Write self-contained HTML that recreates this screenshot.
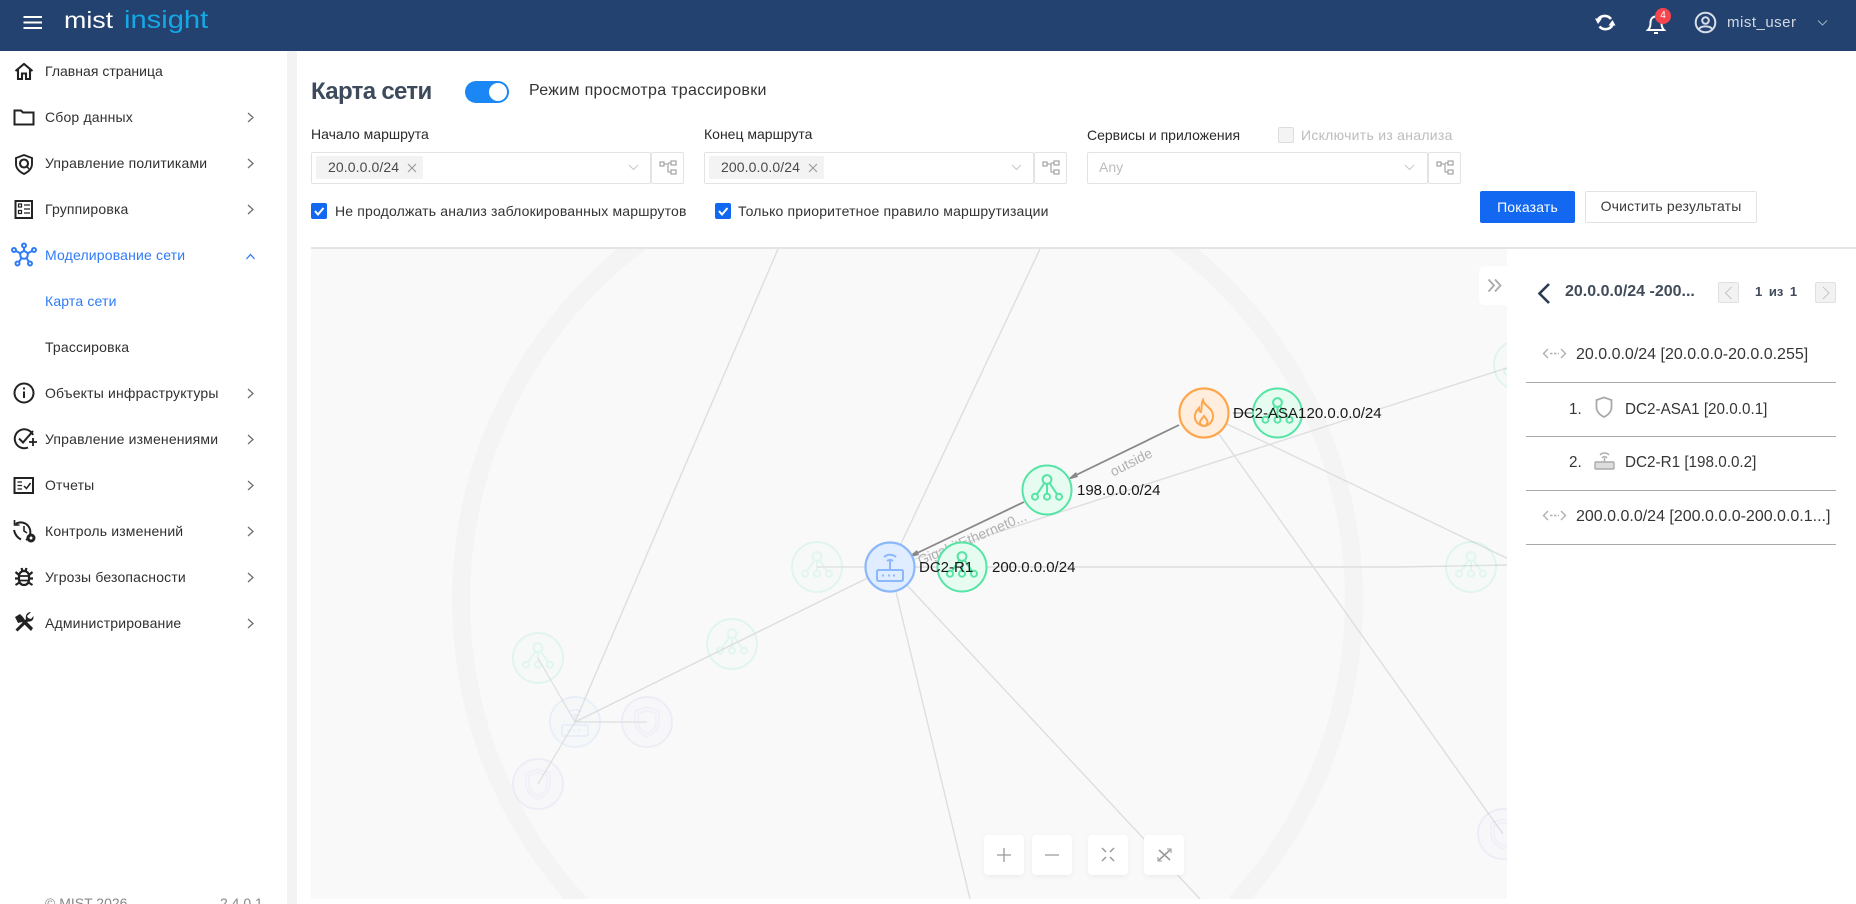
<!DOCTYPE html>
<html lang="ru"><head><meta charset="utf-8"><title>Карта сети</title>
<style>
html,body{margin:0;padding:0;width:1856px;height:904px;overflow:hidden;background:#fff;font-family:"Liberation Sans",Arial,sans-serif;color:#333}
#p{position:absolute;left:0;top:0;width:1856px;height:904px;overflow:hidden;filter:blur(.35px)}
.a{position:absolute}
.t{position:absolute;white-space:nowrap;line-height:16px;height:16px;font-size:14px}
.s{letter-spacing:.17px}
svg{position:absolute;overflow:visible}
.n{color:#303030;letter-spacing:.17px}
.box{position:absolute;box-sizing:border-box;background:#fff;border:1.5px solid #e3e3e3;border-radius:2px}
.tag{position:absolute;background:#f3f3f3;border-radius:2px;height:23px}
.cb{position:absolute;width:16px;height:16px;background:#1268f0;border-radius:2px}
.r{color:#363636;font-size:16px}
.r2{color:#363636;font-size:15.250px}
</style></head><body>
<div class="a" style="left:0;top:0;width:1856px;height:51px;background:#24426f"></div>
<div id="p">
<svg width="0" height="0" style="position:absolute"><defs>
<g id="tree" fill="none" stroke="#55e4a4" stroke-width="2"><circle cx="0" cy="-10.5" r="4.4"/><circle cx="-12" cy="6.7" r="3"/><circle cx="0" cy="6.7" r="3"/><circle cx="12" cy="6.7" r="3"/><path d="M-2.5-7-10 4.2M0-6V3.700M2.5-7 10 4.2"/></g>
<g id="shield" fill="none" stroke="#c9b8f0" stroke-width="1.8"><path d="M0-15 12-11V0C12 8 6 12 0 15-6 12-12 8-12 0V-11Z"/><path d="M0-11.500 9-8.500V0C9 6 4.500 9.500 0 11.500-4.500 9.500-9 6-9 0V-8.500Z"/></g>
<g id="router" fill="none" stroke="#8ab8fb" stroke-width="2"><rect x="-13" y="3" width="26" height="11" rx="1.500"/><path d="M0 3V-7M-6-10A9 9 0 0 1 6-10M-3-6A4.500 4.500 0 0 1 3-6"/><path d="M-8 8.500H-6M-2 8.500H0M3 8.500H5" stroke-width="2"/></g>
</defs></svg>

<!-- header -->
<div class="a" style="left:0;top:0;width:1856px;height:51px;background:#24426f"></div>
<svg style="left:0;top:0" width="60" height="50"><path d="M23.500 17H42M23.500 22.500H42M23.500 28H42" stroke="#fff" stroke-width="2"/></svg>
<div class="t" style="left:64px;top:5px;height:30px;line-height:30px;font-size:23.500px;transform:scaleX(1.140);transform-origin:0 0;color:#fff">mist</div>
<div class="t" style="left:124px;top:5px;height:32px;line-height:30px;font-size:25px;transform:scaleX(1.165);transform-origin:0 0;color:#14a9e6">insight</div>
<svg style="left:1590px;top:10px" width="30" height="26" fill="none" stroke="#fff" stroke-width="2.600"><path d="M8 9.500A8 8 0 0 1 21 9"/><path d="M22.500 15A8 8 0 0 1 9.500 16.500"/><path d="M5 8.500H12L8 14ZM25.500 15.500H18.500L22.500 10Z" fill="#fff" stroke="none"/></svg>
<svg style="left:1645px;top:10px" width="22" height="26" fill="none" stroke="#fff" stroke-width="2"><path d="M3 20C5 18 5.500 16 5.500 13 5.500 9 7.500 6.500 11 6.500S16.500 9 16.500 13C16.500 16 17 18 19 20Z"/><path d="M9 23H13" stroke-width="2"/></svg>
<div class="a" style="left:1655px;top:8px;width:16px;height:16px;border-radius:50%;background:#f5454f;color:#fff;font-size:10px;line-height:16px;text-align:center">4</div>
<svg style="left:1694px;top:11px" width="24" height="24" fill="none" stroke="#d8dee8" stroke-width="2"><circle cx="11.500" cy="11.500" r="9.800"/><circle cx="11.500" cy="9.500" r="3.300"/><path d="M5 18C7 14.500 16 14.500 18 18"/></svg>
<div class="t" style="left:1727px;top:15px;color:#d2d9e3;font-size:15px;letter-spacing:.5px">mist_user</div>
<svg style="left:1816px;top:18px" width="12" height="10" fill="none" stroke="#9fb0c7" stroke-width="1"><path d="M2 2.500 6.500 7 11 2.500"/></svg>

<!-- sidebar -->
<div class="a" style="left:287px;top:51px;width:10px;height:853px;background:#f3f3f3"></div>
<div class="t n" style="left:45px;top:63px;letter-spacing:.02px">Главная страница</div>
<div class="t n" style="left:45px;top:109px">Сбор данных</div>
<div class="t n" style="left:45px;top:155px">Управление политиками</div>
<div class="t n" style="left:45px;top:201px">Группировка</div>
<div class="t s" style="left:45px;top:247px;color:#2f7bf6">Моделирование сети</div>
<div class="t s" style="left:45px;top:293px;color:#2f7bf6">Карта сети</div>
<div class="t n" style="left:45px;top:339px">Трассировка</div>
<div class="t n" style="left:45px;top:385px">Объекты инфраструктуры</div>
<div class="t n" style="left:45px;top:431px">Управление изменениями</div>
<div class="t n" style="left:45px;top:477px">Отчеты</div>
<div class="t n" style="left:45px;top:523px">Контроль изменений</div>
<div class="t n" style="left:45px;top:569px">Угрозы безопасности</div>
<div class="t n" style="left:45px;top:615px">Администрирование</div>
<div class="t" style="left:45px;top:895px;height:9px;overflow:hidden;font-size:14px;color:#888">© MIST 2026</div>
<div class="t" style="left:220px;top:895px;height:9px;overflow:hidden;font-size:14px;color:#888">2.4.0.1</div>

<svg style="left:0;top:0" width="287" height="660" fill="none" stroke="#6e6e6e" stroke-width="1.300">
<path d="M248 113 253 117.500 248 122M248 159 253 163.500 248 168M248 205 253 209.500 248 214M248 389 253 393.500 248 398M248 435 253 439.500 248 444M248 481 253 485.500 248 490M248 527 253 531.500 248 536M248 573 253 577.500 248 582M248 619 253 623.500 248 628"/>
<path d="M246.500 259 250.500 254.500 254.500 259" stroke="#2f7bf6"/>
</svg>
<!-- sidebar icons -->
<svg style="left:0;top:50px" width="45" height="600" fill="none" stroke="#222" stroke-width="2.100" stroke-linejoin="miter">
<path d="M15.500 21 24 14 32.500 21M18 19.500V29H22V23.500H26V29H30V19.500"/>
<path d="M14.500 60.500H21L23 62.500H33.500V74.500H14.500Z" stroke-width="2"/>
<path d="M24 105 32 108V114C32 119 28 122 24 124 20 122 16 119 16 114V108Z" stroke-width="1.900"/><circle cx="24" cy="113.500" r="4"/><path d="M27 116.500 29 119" stroke-width="1.600"/>
<rect x="15.500" y="151" width="16.500" height="17" stroke-width="2"/><path d="M24 155H30M24 159H30M24 163H30" stroke-width="1.200"/><rect x="18.500" y="154" width="3" height="3" stroke-width="1.200"/><rect x="18.500" y="160.500" width="3" height="3" stroke-width="1.200"/>
<g stroke="#2f7bf6" stroke-width="2"><circle cx="24" cy="205" r="3.800"/><circle cx="24" cy="195.500" r="2"/><circle cx="14" cy="200" r="2"/><circle cx="34" cy="200" r="2"/><circle cx="17.500" cy="213.500" r="2"/><circle cx="30" cy="213.500" r="2"/><path d="M24 197.500V201M16 201 20.500 203.500M32 201 27.500 203.500M19 212 21.500 208M29 212 26.500 208"/></g>
<circle cx="24" cy="343" r="9.500" stroke-width="2"/><path d="M24 341.500V348M24 337.500V339.500" stroke-width="2"/>
<path d="M33 385A9.500 9.500 0 1 0 28 397.500" stroke-width="2"/><path d="M19 388.500 23 392.500 33 381" stroke-width="2"/><path d="M33 388V396M29 392H37" stroke-width="1.800"/>
<rect x="14.500" y="428" width="18.500" height="15" stroke-width="2"/><path d="M17.500 432H22M17.500 435.500H22M17.500 439H22" stroke-width="1.300"/><path d="M24 436 26.500 438.500 30.500 433" stroke-width="1.500"/>
<path d="M15.500 474A9 9 0 1 1 26 490M14 480C15 485 18 488 21 489.500" stroke-width="2"/><path d="M14.500 470V475H19.500" stroke-width="1.600"/><path d="M24 476V481L27 483" stroke-width="1.600"/><circle cx="31" cy="488" r="3" stroke-width="3"/>
<g stroke-width="2.200"><rect x="19" y="521" width="10" height="14" rx="5"/><path d="M20 526H28M20 530.500H28"  stroke-width="1.800"/><path d="M15.500 522 19 525M32.500 522 29 525M15 528.500H19M33 528.500H29M15.500 535 19.500 532.500M32.500 535 28.500 532.500M21.500 518 22.500 521M26.500 518 25.500 521"/></g>
<path d="M15 567 20 564 23 567 25 570 33 578 31 581 22 572 18 573ZM31 562 27 566 28 568 31 569 33.500 566 33.500 567C33.500 571 30 572 28 571.500L17.500 581.500 15.500 579.500 26 569C25 566 27 562 31 562Z" fill="#222" stroke="none"/>
</svg>

<!-- top controls -->
<div class="t" style="left:311px;top:78px;height:28px;line-height:28px;font-size:24px;font-weight:bold;color:#3d4a5c;letter-spacing:-.67px">Карта сети</div>
<div class="a" style="left:465px;top:81px;width:44px;height:22px;border-radius:11px;background:#1a87f5"></div>
<div class="a" style="left:489px;top:83px;width:18px;height:18px;border-radius:50%;background:#fff"></div>
<div class="t" style="left:529px;top:83px;font-size:16px;letter-spacing:.3px;color:#333">Режим просмотра трассировки</div>

<div class="t" style="left:311px;top:126px;color:#2a2a2a">Начало маршрута</div>
<div class="t" style="left:704px;top:126px;color:#2a2a2a">Конец маршрута</div>
<div class="t" style="left:1087px;top:127px;color:#2a2a2a">Сервисы и приложения</div>
<div class="a" style="left:1278px;top:127px;width:16px;height:16px;box-sizing:border-box;border:1px solid #ddd;background:#f4f4f4;border-radius:2px"></div>
<div class="t" style="left:1301px;top:127px;color:#bdbdbd;letter-spacing:.28px">Исключить из анализа</div>

<div class="box" style="left:311px;top:152px;width:340px;height:32px"></div>
<div class="box" style="left:651px;top:152px;width:33px;height:32px"></div>
<div class="box" style="left:704px;top:152px;width:330px;height:32px"></div>
<div class="box" style="left:1034px;top:152px;width:33px;height:32px"></div>
<div class="box" style="left:1087px;top:152px;width:341px;height:32px"></div>
<div class="box" style="left:1428px;top:152px;width:33px;height:32px"></div>
<div class="tag" style="left:316px;top:156px;width:107px"></div>
<div class="tag" style="left:709px;top:156px;width:115px"></div>
<div class="t" style="left:328px;top:159px;color:#4a4a4a;letter-spacing:.1px">20.0.0.0/24</div>
<div class="t" style="left:721px;top:159px;color:#4a4a4a;letter-spacing:.1px">200.0.0.0/24</div>
<div class="t" style="left:1099px;top:159px;color:#bdbdbd">Any</div>
<svg style="left:0;top:0" width="1500" height="200" fill="none" stroke="#9a9a9a" stroke-width="1.100">
<path d="M408 164 416 172M416 164 408 172M809 164 817 172M817 164 809 172"/>
<g stroke="#c9c9c9"><path d="M629 165 633.500 169.500 638 165M1012 165 1016.500 169.500 1021 165M1405 165 1409.500 169.500 1414 165"/></g>
<g><rect x="660" y="162" width="4" height="4"/><rect x="671" y="161" width="5" height="4"/><rect x="671" y="170" width="5" height="4"/><path d="M664 164H668V172H671M668 163H671"/></g>
<g transform="translate(383,0)"><rect x="660" y="162" width="4" height="4"/><rect x="671" y="161" width="5" height="4"/><rect x="671" y="170" width="5" height="4"/><path d="M664 164H668V172H671M668 163H671"/></g>
<g transform="translate(777,0)"><rect x="660" y="162" width="4" height="4"/><rect x="671" y="161" width="5" height="4"/><rect x="671" y="170" width="5" height="4"/><path d="M664 164H668V172H671M668 163H671"/></g>
</svg>

<div class="cb" style="left:311px;top:203px"></div>
<div class="cb" style="left:715px;top:203px"></div>
<svg style="left:0;top:0" width="800" height="230" fill="none" stroke="#fff" stroke-width="2"><path d="M315 211 318 214.500 323.500 208M719 211 722 214.500 727.500 208"/></svg>
<div class="t s" style="left:335px;top:203px;color:#333">Не продолжать анализ заблокированных маршрутов</div>
<div class="t s" style="left:738px;top:203px;color:#333">Только приоритетное правило маршрутизации</div>

<div class="a s" style="left:1480px;top:191px;width:95px;height:32px;background:#1268f0;border-radius:2px;color:#fff;font-size:14px;line-height:32px;text-align:center">Показать</div>
<div class="box s" style="left:1585px;top:191px;width:172px;height:32px;border-color:#e3e3e3;font-size:14px;line-height:29px;text-align:center;color:#3a3a3a">Очистить результаты</div>

<!-- map -->
<div class="a" style="left:311px;top:247px;width:1545px;height:2px;background:#e4e4e4"></div>
<div class="a" style="left:311px;top:249px;width:1196px;height:650px;background:#f9f9f9"></div>
<svg style="left:311px;top:249px;overflow:hidden" width="1196" height="650" viewBox="311 249 1196 650">
<path d="M643.500 240A446.500 446.500 0 0 0 579.500 903M1171.500 240A446.500 446.500 0 0 1 1235.500 903" fill="none" stroke="#f4f4f4" stroke-width="18"/>
<g stroke="#dedede" stroke-width="1.400" fill="none">
<path d="M890 567 1040 249M890 567 1519 364M890 567H1400L1507 565M890 567 970 899M890 567 1200 899M890 567 575 722M1204 413 1519 564M1204 413 1503 834M575 722 778 249"/>
</g>
<g opacity=".14">
<circle cx="817" cy="567" r="25" fill="#e6fcf1" stroke="#4fe3a0" stroke-width="2"/><use href="#tree" x="817" y="567"/>
<circle cx="732" cy="644" r="25" fill="#e6fcf1" stroke="#4fe3a0" stroke-width="2"/><use href="#tree" x="732" y="644"/>
<circle cx="538" cy="658" r="25" fill="#e6fcf1" stroke="#4fe3a0" stroke-width="2"/><use href="#tree" x="538" y="658"/>
<circle cx="1471" cy="567" r="25" fill="#e6fcf1" stroke="#4fe3a0" stroke-width="2"/><use href="#tree" x="1471" y="567"/>
<circle cx="1519" cy="365" r="25" fill="#e6fcf1" stroke="#4fe3a0" stroke-width="2"/><use href="#tree" x="1519" y="365"/>
<circle cx="575" cy="722" r="25" fill="#e0ecff" stroke="#8ab8fb" stroke-width="2"/><use href="#router" x="575" y="722"/>
<circle cx="647" cy="722" r="25" fill="#ece6fb" stroke="#b8a0ef" stroke-width="2"/><use href="#shield" x="647" y="722"/>
<circle cx="538" cy="784" r="25" fill="#ece6fb" stroke="#b8a0ef" stroke-width="2"/><use href="#shield" x="538" y="784"/>
<circle cx="1503" cy="834" r="25" fill="#ece6fb" stroke="#b8a0ef" stroke-width="2"/><use href="#shield" x="1503" y="834"/>
</g>
<g stroke="#dedede" stroke-width="1.200" fill="none"><path d="M890 567 575 722M817 567H890M538 658 575 722 538 784M575 722H647"/></g>
<g stroke="#888" stroke-width="1.800" fill="none"><path d="M1179 425 1072 477M1024 502 913 555"/></g>
<path d="M1067 480 1076 472 1078 477ZM907 558 917 550 919 555Z" fill="#888"/>
<text x="1131" y="467" font-size="14" fill="#b0b0b0" text-anchor="middle" transform="rotate(-27 1131 462)" font-family="Liberation Sans,sans-serif">outside</text>
<text x="972" y="543" font-size="14" fill="#b0b0b0" text-anchor="middle" transform="rotate(-23 972 538)" font-family="Liberation Sans,sans-serif">GigabitEthernet0...</text>
<circle cx="1277.500" cy="413" r="24.500" fill="#e6fcf1" stroke="#55e4a4" stroke-width="2"/><use href="#tree" x="1277.500" y="413"/>
<circle cx="1204" cy="413" r="24.500" fill="#ffeede" stroke="#ffa64d" stroke-width="2.200"/>
<g transform="translate(1204 413)" fill="none" stroke="#ffa64d" stroke-width="2"><path d="M-1-13C0-8 4-7 7-3 11 2 9 12 0 13-8 12-11 5-8-1-7-3-6-4-5-5-5-2-4-1-3-1-2-5-3-9-1-13Z"/><path d="M0 3C2 6 4 7 3.500 9.500 3 12 1 13 0 13-1 13-4 12-4 9.500-4 7-2 6 0 3Z"/></g>
<circle cx="1047" cy="490" r="24.500" fill="#e6fcf1" stroke="#55e4a4" stroke-width="2"/><use href="#tree" x="1047" y="490"/>
<circle cx="962" cy="567" r="24.500" fill="#e6fcf1" stroke="#55e4a4" stroke-width="2"/><use href="#tree" x="962" y="567"/>
<circle cx="890" cy="567" r="24.500" fill="#e0ecff" stroke="#8ab8fb" stroke-width="2.200"/><use href="#router" x="890" y="567"/>
<path d="M1233 413H1252" stroke="#777" stroke-width="1"/>
<g font-family="Liberation Sans,sans-serif" font-size="15" fill="#181818">
<text x="1233" y="418">DC2-ASA1</text><text x="1306.500" y="418">20.0.0.0/24</text>
<text x="1077" y="495">198.0.0.0/24</text>
<text x="919" y="572">DC2-R1</text>
<text x="992" y="572">200.0.0.0/24</text>
</g>
</svg>

<!-- expand tab -->
<div class="a" style="left:1479px;top:266px;width:28px;height:39px;background:#fff;border-radius:6px 0 0 6px"></div>
<svg style="left:1485px;top:276px" width="22" height="20" fill="none" stroke="#aaa" stroke-width="1.800"><path d="M3.500 3.500 9 9.500 3.500 15.500M10 3.500 15.500 9.500 10 15.500"/></svg>

<!-- zoom controls -->
<div class="a" style="left:984px;top:835px;width:40px;height:40px;background:#fff;border-radius:4px;box-shadow:0 2px 6px rgba(0,0,0,.05)"></div>
<div class="a" style="left:1032px;top:835px;width:40px;height:40px;background:#fff;border-radius:4px;box-shadow:0 2px 6px rgba(0,0,0,.05)"></div>
<div class="a" style="left:1088px;top:835px;width:40px;height:40px;background:#fff;border-radius:4px;box-shadow:0 2px 6px rgba(0,0,0,.05)"></div>
<div class="a" style="left:1144px;top:835px;width:40px;height:40px;background:#fff;border-radius:4px;box-shadow:0 2px 6px rgba(0,0,0,.05)"></div>
<svg style="left:0;top:0" width="1200" height="904" fill="none" stroke="#9a9a9a" stroke-width="1.300">
<path d="M1004 848V862M997 855H1011M1045 855H1059"/>
<path d="M1102 848 1106 852M1114 848 1110 852M1102 861 1106 857M1114 861 1110 857" stroke-width="1.500"/>
<path d="M1159 850 1170 860M1170 850 1159 860" stroke-width="1.600"/><path d="M1167 849H1171V853M1158 857V861H1162" stroke-width="1.100"/>
</svg>

<!-- right panel -->
<svg style="left:1530px;top:275px" width="30" height="36" fill="none" stroke="#2a3b52" stroke-width="2.600"><path d="M19 9 9.500 18.500 19 28"/></svg>
<div class="t" style="left:1565px;top:284px;font-size:16px;font-weight:bold;color:#414c5a">20.0.0.0/24 -200...</div>
<div class="a" style="left:1718px;top:282px;width:21px;height:21px;box-sizing:border-box;background:#f2f2f2;border:1px solid #e0e0e0;border-radius:2px"></div>
<div class="a" style="left:1815px;top:282px;width:21px;height:21px;box-sizing:border-box;background:#f2f2f2;border:1px solid #e0e0e0;border-radius:2px"></div>
<svg style="left:1700px;top:270px" width="150" height="40" fill="none" stroke="#c4c4c4" stroke-width="1"><path d="M31.500 17 25.500 23 31.500 29M123 17 129 23 123 29"/></svg>
<div class="t" style="left:1755px;top:284px;font-size:13px;font-weight:bold;color:#414c5a;word-spacing:3px">1 из 1</div>

<div class="t r" style="left:1576px;top:347px">20.0.0.0/24 [20.0.0.0-20.0.0.255]</div>
<div class="a" style="left:1526px;top:382px;width:310px;height:1px;background:#aaa"></div>
<div class="t r2" style="left:1569px;top:402px">1.</div>
<div class="t r2" style="left:1625px;top:402px">DC2-ASA1 [20.0.0.1]</div>
<div class="a" style="left:1526px;top:436px;width:310px;height:1px;background:#aaa"></div>
<div class="t r2" style="left:1569px;top:455px">2.</div>
<div class="t r2" style="left:1625px;top:455px">DC2-R1 [198.0.0.2]</div>
<div class="a" style="left:1526px;top:490px;width:310px;height:1px;background:#aaa"></div>
<div class="t r" style="left:1576px;top:509px">200.0.0.0/24 [200.0.0.0-200.0.0.1...]</div>
<div class="a" style="left:1526px;top:544px;width:310px;height:1px;background:#aaa"></div>
<svg style="left:1540px;top:340px" width="300" height="190" fill="none" stroke="#b0b0b0" stroke-width="1.400">
<path d="M8 9 3.500 13.500 8 18M21 9 25.500 13.500 21 18"/><path d="M10 13.500H19" stroke-dasharray="2.500 1.500"/>
<path d="M8 171 3.500 175.500 8 180M21 171 25.500 175.500 21 180"/><path d="M10 175.500H19" stroke-dasharray="2.500 1.500"/>
<path d="M64 60.500 71.500 63V70C71.500 75 68 78 64 80 60 78 56.500 75 56.500 70V63Z" stroke="#aaa" stroke-width="1.800" transform="translate(0,-3)"/>
<rect x="55" y="122" width="19" height="7" rx="1" stroke="#aaa" fill="#ddd"/><path d="M64.500 122V118M60 115A6 6 0 0 1 69 115M62 118A3 3 0 0 1 67 118" stroke="#aaa"/>
</svg>
</div></body></html>
